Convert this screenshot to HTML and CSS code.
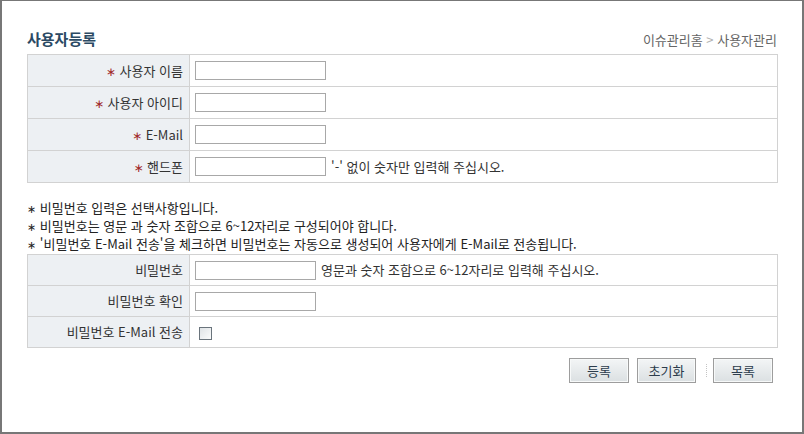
FILE: index.html
```html
<!DOCTYPE html>
<html lang="ko">
<head>
<meta charset="utf-8">
<title>사용자등록</title>
<link rel="stylesheet" href="styles.css">
</head>
<body>
<div class="frame">
  <div class="header">
    <h1 class="title">사용자등록</h1>
    <div class="crumb">이슈관리홈 <span class="sep">&gt;</span> 사용자관리</div>
  </div>
  <table class="form form-a">
    <tr><th><span class="req">∗</span> 사용자 이름</th><td><input class="field" type="text"></td></tr>
    <tr><th><span class="req">∗</span> 사용자 아이디</th><td><input class="field" type="text"></td></tr>
    <tr><th><span class="req">∗</span> E-Mail</th><td><input class="field" type="text"></td></tr>
    <tr><th><span class="req">∗</span> 핸드폰</th><td><input class="field" type="text"><span class="hint">'-' 없이 숫자만 입력해 주십시오.</span></td></tr>
  </table>
  <ul class="notes">
    <li><span class="star">∗</span> 비밀번호 입력은 선택사항입니다.</li>
    <li><span class="star">∗</span> 비밀번호는 영문 과 숫자 조합으로 6~12자리로 구성되어야 합니다.</li>
    <li><span class="star">∗</span> '비밀번호 E-Mail 전송'을 체크하면 비밀번호는 자동으로 생성되어 사용자에게 E-Mail로 전송됩니다.</li>
  </ul>
  <table class="form form-b">
    <tr><th>비밀번호</th><td><input class="field short" type="password"><span class="hint">영문과 숫자 조합으로 6~12자리로 입력해 주십시오.</span></td></tr>
    <tr><th>비밀번호 확인</th><td><input class="field short" type="password"></td></tr>
    <tr><th>비밀번호 E-Mail 전송</th><td><span class="check"></span></td></tr>
  </table>
  <div class="actions">
    <button class="btn" type="button">등록</button>
    <button class="btn btn-mid" type="button">초기화</button>
    <span class="divider"></span>
    <button class="btn" type="button">목록</button>
  </div>
</div>
</body>
</html>
```
FILE: styles.css
```css
* { box-sizing: border-box; }
html, body { margin: 0; padding: 0; background: #fff; }
body {
  font-family: "Noto Sans CJK KR", "Noto Sans", "Liberation Sans", sans-serif;
  font-size: 13px;
  color: #333;
}
.frame {
  width: 804px;
  height: 434px;
  border: 2px solid #777;
  border-top-width: 1px;
  padding: 0 25px 0 25px;
}
.header {
  display: flex;
  justify-content: space-between;
  align-items: flex-end;
  height: 53px;
  padding-bottom: 6px;
}
.title {
  margin: 0;
  font-size: 15px;
  font-weight: bold;
  color: #2b4a64;
  line-height: 18px;
}
.crumb {
  font-size: 13px;
  color: #666;
  line-height: 16px;
}
.crumb .sep { color: #b0b0b0; }
.form {
  width: 751px;
  border-collapse: collapse;
  border: 1px solid #d2d2d2;
}
.form th, .form td {
  border: 1px solid #d2d2d2;
  padding: 0;
  line-height: 16px;
}
.form th {
  width: 162px;
  background: #edf0f3;
  text-align: right;
  font-weight: normal;
  padding-right: 6px;
  color: #333;
}
.form td {
  padding-left: 5px;
  background: #fff;
}
.form-a tr { height: 32px; }
.form-b tr { height: 31px; }
.req {
  font-family: "DejaVu Sans", sans-serif;
  color: #a02828;
  font-size: 12px;
  line-height: 1;
}
.star {
  font-family: "DejaVu Sans", sans-serif;
  font-size: 11px;
  line-height: 1;
}
.field {
  width: 131px;
  height: 19px;
  border: 1px solid #a8a8a8;
  padding: 0 2px;
  margin: 0;
  vertical-align: middle;
  font: inherit;
}
.field.short { width: 121px; }
.hint {
  margin-left: 5px;
  vertical-align: middle;
  color: #333;
}
.check {
  display: inline-block;
  width: 13px;
  height: 13px;
  margin-left: 4px;
  border: 1px solid #6a747c;
  background: linear-gradient(135deg, #dfe3e6, #fbfcfc);
  vertical-align: middle;
}
.notes {
  list-style: none;
  margin: 16px 0 1px 0;
  padding: 0;
  color: #222;
}
.notes li {
  height: 18px;
  line-height: 18px;
  overflow: hidden;
  white-space: nowrap;
}
.actions {
  display: flex;
  justify-content: flex-end;
  align-items: center;
  gap: 8px;
  margin-top: 10px;
  padding-right: 4px;
}
.btn {
  width: 60px;
  height: 25px;
  margin: 0;
  padding: 0;
  border: 1px solid #9d9d9d;
  box-shadow: inset 0 0 0 1px #f7f9f9;
  background: linear-gradient(#f3f5f6, #dbe0e2);
  font: inherit;
  font-size: 13px;
  color: #2c3c4c;
}
.btn-mid { width: 59px; }
.divider {
  width: 0;
  height: 13px;
  border-left: 1px dotted #c4c4c4;
  margin: 0 -2px 0 2px;
}
```
